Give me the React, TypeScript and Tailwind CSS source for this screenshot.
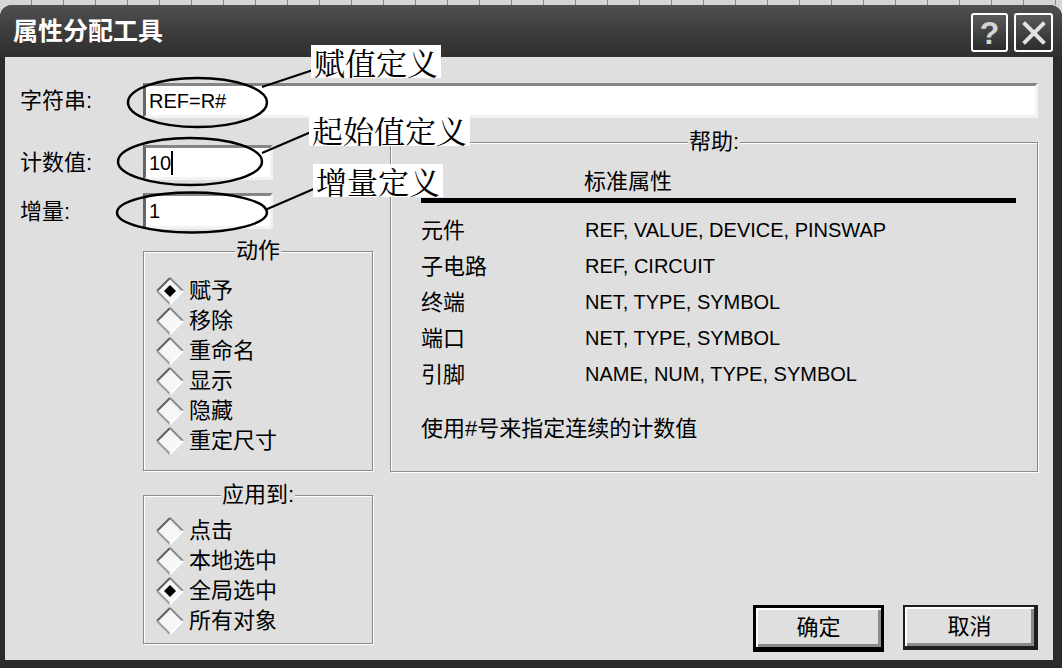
import React from 'react'

const ACTIONS = [
  { label: '赋予', on: true },
  { label: '移除', on: false },
  { label: '重命名', on: false },
  { label: '显示', on: false },
  { label: '隐藏', on: false },
  { label: '重定尺寸', on: false },
]

const SCOPES = [
  { label: '点击', on: false },
  { label: '本地选中', on: false },
  { label: '全局选中', on: true },
  { label: '所有对象', on: false },
]

const HELP_ROWS = [
  ['元件', 'REF, VALUE, DEVICE, PINSWAP'],
  ['子电路', 'REF, CIRCUIT'],
  ['终端', 'NET, TYPE, SYMBOL'],
  ['端口', 'NET, TYPE, SYMBOL'],
  ['引脚', 'NAME, NUM, TYPE, SYMBOL'],
]

// diamond-shaped radio button, old-style 3D look
function Diamond({ on }: { on: boolean }) {
  return (
    <svg width="28" height="28" viewBox="0 0 28 28" className="shrink-0">
      <polygon points="14,1 27,14 14,27 1,14" fill="#f6f6f6" />
      <polyline points="1,14 14,1" fill="none" stroke="#5e5e5e" strokeWidth="2" />
      <polyline points="14,1 27,14" fill="none" stroke="#8c8c8c" strokeWidth="2" />
      <polyline points="1,14 14,27" fill="none" stroke="#9c9c9c" strokeWidth="2" />
      <polyline points="14,27 27,14" fill="none" stroke="#ffffff" strokeWidth="2" />
      {on && <polygon points="14,8 20,14 14,20 8,14" fill="#000" />}
    </svg>
  )
}

function Radio({ label, on }: { label: string; on: boolean }) {
  return (
    <div className="flex h-[30px] items-center gap-[5px]">
      <Diamond on={on} />
      <span className="text-[22px] leading-[30px]">{label}</span>
    </div>
  )
}

function GroupBox({ title, className, children }: { title: string; className: string; children: React.ReactNode }) {
  return (
    <div className={`relative border border-[#8a8a8a] shadow-[inset_1px_1px_0_#fff,1px_1px_0_#fff] ${className}`}>
      <span className="absolute -top-[13px] left-1/2 -translate-x-1/2 bg-[#dfdfdf] px-[1px] text-[22px] leading-[24px]">
        {title}
      </span>
      {children}
    </div>
  )
}

function Field({ className, children }: { className: string; children?: React.ReactNode }) {
  return (
    <div
      className={`flex items-center border-[3px] border-t-[#858585] border-l-[#666] border-r-[#f3f3f3] border-b-[#f3f3f3] bg-white pl-[3px] text-[20px] ${className}`}
    >
      {children}
    </div>
  )
}

function Callout({ className, text }: { className: string; text: string }) {
  return (
    <div
      className={`absolute bg-white px-[3px] text-[31px] leading-[33px] text-black font-['Noto_Serif_CJK_SC','Noto_Sans_CJK_SC',serif] ${className}`}
    >
      {text}
    </div>
  )
}

export default function App() {
  return (
    <div className="relative h-[668px] w-[1062px] overflow-hidden bg-[#d6d6d6] font-['Liberation_Sans','Noto_Sans_CJK_SC',sans-serif] text-black">
      {/* scanned ruler strip above the window */}
      <div className="h-[5px] bg-[repeating-linear-gradient(90deg,#d6d6d6_0,#d6d6d6_31px,#8a8a8a_31px,#8a8a8a_32px)]" />

      {/* ── Window ── */}
      <div className="flex h-[663px] flex-col rounded-t-[12px] bg-[#2b2b2b]">
        {/* Title bar */}
        <div className="flex h-[52px] items-center rounded-t-[12px] bg-linear-to-b from-[#505050] via-[#3d3d3d] to-[#2f2f2f] pl-[13px] pr-[9px]">
          <span className="text-[25px] font-bold leading-none text-white">属性分配工具</span>
          <div className="ml-auto mt-[3px] flex gap-[6px]">
            <div className="flex h-[39px] w-[37px] items-center justify-center rounded-[3px] border-2 border-white bg-linear-to-b from-[#5a5a5a] to-[#2c2c2c] text-[32px] font-bold leading-none text-[#d4d4d4]">
              ?
            </div>
            <div className="flex h-[39px] w-[39px] items-center justify-center rounded-[3px] border-2 border-white bg-linear-to-b from-[#5a5a5a] to-[#2c2c2c]">
              <svg width="26" height="26" viewBox="0 0 26 26">
                <path d="M4 4 L22 22 M22 4 L4 22" stroke="#e2e2e2" strokeWidth="4" strokeLinecap="square" />
              </svg>
            </div>
          </div>
        </div>

        {/* Body */}
        <div className="flex-1 pb-[8px] pl-[5px] pr-[9px]">
          <div className="h-full bg-[#dfdfdf] px-[15px] pt-[26px]">
            {/* 字符串 row */}
            <div className="flex h-[35px] items-center">
              <span className="w-[123px] text-[22px]">字符串:</span>
              <Field className="h-full flex-1">REF=R#</Field>
            </div>

            <div className="mt-[24px] flex">
              {/* Left column */}
              <div className="flex w-[370px] flex-col">
                <div className="mt-[3px] flex items-center">
                  <span className="w-[123px] text-[22px]">计数值:</span>
                  <Field className="h-[35px] w-[130px]">
                    10<span className="inline-block h-[24px] w-[2px] bg-black" />
                  </Field>
                </div>
                <div className="mt-[13px] flex items-center">
                  <span className="w-[123px] text-[22px]">增量:</span>
                  <Field className="h-[36px] w-[130px]">1</Field>
                </div>

                <GroupBox title="动作" className="ml-[123px] mt-[22px] h-[220px] w-[230px] pl-[12px] pt-[24px]">
                  {ACTIONS.map((a) => (
                    <Radio key={a.label} label={a.label} on={a.on} />
                  ))}
                </GroupBox>

                <GroupBox title="应用到:" className="ml-[123px] mt-[24px] h-[149px] w-[230px] pl-[12px] pt-[20px]">
                  {SCOPES.map((s) => (
                    <Radio key={s.label} label={s.label} on={s.on} />
                  ))}
                </GroupBox>
              </div>

              {/* Right column */}
              <div className="flex flex-1 flex-col">
                <GroupBox title="帮助:" className="h-[330px] pl-[30px]">
                  <div className="ml-[163px] mt-[26px] h-[26px] text-[22px] leading-[26px]">标准属性</div>
                  <div className="mr-[21px] mt-[3px] h-[5px] bg-black" />
                  <div className="mt-[9px]">
                    {HELP_ROWS.map(([k, v]) => (
                      <div key={k} className="flex h-[36px] items-center">
                        <span className="w-[164px] text-[22px]">{k}</span>
                        <span className="text-[20px]">{v}</span>
                      </div>
                    ))}
                  </div>
                  <div className="mt-[18px] flex h-[36px] items-center text-[22px]">使用#号来指定连续的计数值</div>
                </GroupBox>

                <div className="mt-[133px] flex items-start justify-end gap-[19px]">
                  <button className="flex h-[47px] w-[131px] items-center justify-center border-[3px] border-b-[5px] border-black bg-[#dfdfdf] text-[22px] shadow-[inset_2px_2px_0_#fff,inset_-3px_-3px_0_#8a8a8a]">
                    确定
                  </button>
                  <button className="flex h-[45px] w-[135px] items-center justify-center border-2 border-r-[4px] border-b-[4px] border-[#1e1e1e] bg-[#dfdfdf] text-[22px] shadow-[inset_2px_2px_0_#fff,inset_-3px_-3px_0_#8a8a8a]">
                    取消
                  </button>
                </div>
              </div>
            </div>
          </div>
        </div>
      </div>

      {/* Annotation overlay: ellipses and leader lines */}
      <svg className="pointer-events-none absolute inset-0" width="1062" height="668" viewBox="0 0 1062 668">
        <g fill="none" stroke="#000" strokeWidth="2.5">
          <ellipse cx="197.5" cy="102.5" rx="69.5" ry="24.5" />
          <ellipse cx="190" cy="161.5" rx="72" ry="23.5" />
          <ellipse cx="192" cy="212.5" rx="75" ry="20" />
          <line x1="262" y1="87" x2="313" y2="70" strokeWidth="2" />
          <line x1="262" y1="153" x2="311" y2="132" strokeWidth="2" />
          <line x1="265" y1="210" x2="316" y2="188" strokeWidth="2" />
        </g>
      </svg>
      <Callout className="left-[311px] top-[45px]" text="赋值定义" />
      <Callout className="left-[309px] top-[113px]" text="起始值定义" />
      <Callout className="left-[313px] top-[164px]" text="增量定义" />
    </div>
  )
}
